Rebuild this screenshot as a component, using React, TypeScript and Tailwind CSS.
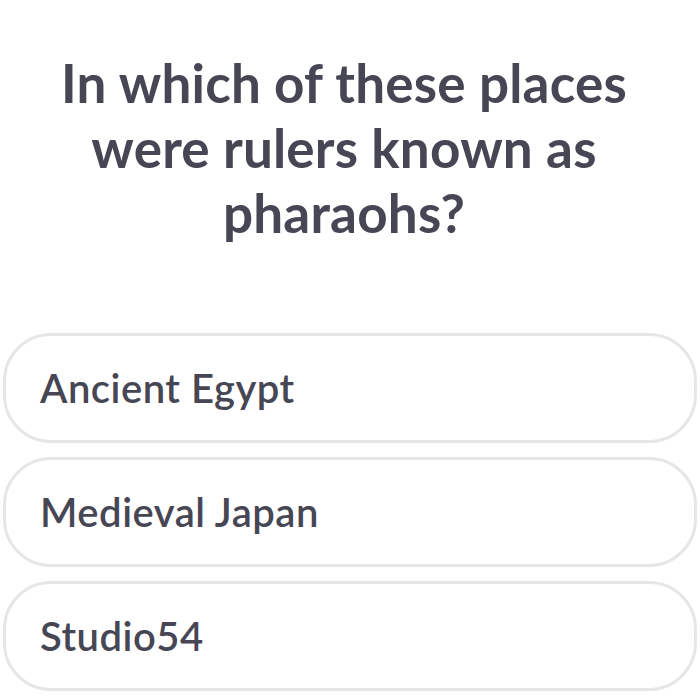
const options = ["Ancient Egypt", "Medieval Japan", "Studio54"];

export default function App() {
  return (
    <div
      className="w-[700px] h-[700px] bg-white overflow-hidden"
      style={{ fontFamily: "Lato, 'Noto Sans', sans-serif" }}
    >
      <div className="h-[333px] pt-[50px] pl-[20px] pr-[32px]">
        <h1 className="text-center text-[53px] leading-[65px] font-bold text-[#464655] tracking-[0.2px]">
          In which of these places were rulers known as pharaohs?
        </h1>
      </div>
      <div className="flex flex-col gap-[14px] px-[3px]">
        {options.map((opt) => (
          <div
            key={opt}
            className="h-[110px] rounded-[48px] border-[3px] border-[#e6e6e9] flex items-center pl-[34px]"
          >
            <span className="text-[40px] font-semibold text-[#464655] tracking-[0.5px]">{opt}</span>
          </div>
        ))}
      </div>
    </div>
  );
}
